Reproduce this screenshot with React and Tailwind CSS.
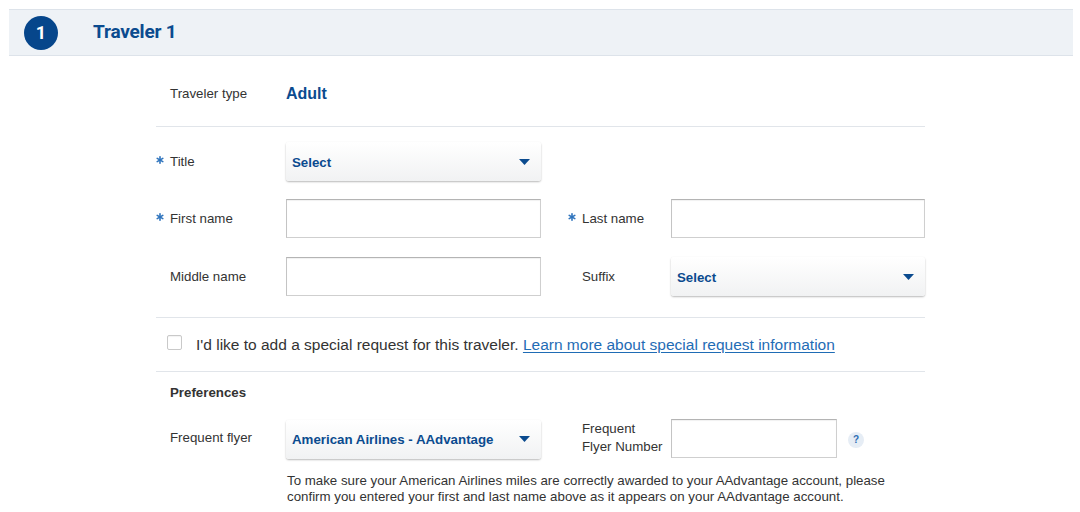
const Caret = () => (
  <svg width="11" height="6" viewBox="0 0 11 6" className="shrink-0">
    <path d="M0 0h11L5.5 6z" fill="#0b4b8f" />
  </svg>
)

// blue six-armed asterisk used for required fields
const Star = () => (
  <svg width="8" height="8" viewBox="0 0 8 8" className="-mt-[3px]">
    <g stroke="#2f74bd" strokeWidth="1.6" strokeLinecap="round">
      <path d="M4 0.8v6.4" />
      <path d="M1.2 2.4l5.6 3.2" />
      <path d="M1.2 5.6l5.6-3.2" />
    </g>
  </svg>
)

const SelectBox = ({ value, width = "w-[255px]" }) => (
  <div className={`${width} h-[39px] flex items-center justify-between pl-[6px] pr-[11px] rounded-[3px] bg-gradient-to-b from-white to-[#f1f2f3] shadow-[0_1px_2px_rgba(0,0,0,0.28)] cursor-pointer`}>
    <span className="text-[13.3px] font-bold text-[#0b4b8f] pt-[2px]">{value}</span>
    <Caret />
  </div>
)

const TextBox = ({ width = "w-[255px]" }) => (
  <div className={`${width} h-[39px] bg-white border border-[#cfcfcf] border-t-[#b4b4b4] border-l-[#c4c4c4] shadow-[inset_0_1px_1px_rgba(0,0,0,0.06)]`} />
)

const Label = ({ required, children, width = "w-[130px]" }) => (
  <div className={`${width} flex items-center shrink-0 text-[13.3px] text-[#333]`}>
    <span className="w-[14px] flex">{required && <Star />}</span>
    <span>{children}</span>
  </div>
)

export default function App() {
  return (
    <div className="w-[1080px] h-[512px] overflow-hidden bg-white pt-[9px]" style={{ fontFamily: '"Liberation Sans", Arial, sans-serif' }}>
      {/* Header band */}
      <div className="ml-[9px] mr-[7px] h-[47px] bg-[#eef2f6] border-y border-[#dde3ea] flex items-center pl-[15px]" style={{ fontFamily: 'Roboto, "Liberation Sans", sans-serif' }}>
        <div className="w-[34px] h-[34px] rounded-full bg-[#06468b] text-white font-bold text-[18px] flex items-center justify-center">1</div>
        <h2 className="ml-[35px] text-[19px] font-bold text-[#0b4b8f] tracking-[-0.2px]">Traveler 1</h2>
      </div>

      <div className="ml-[156px] w-[769px]">
        {/* Traveler type */}
        <div className="h-[71px] flex items-center pt-[6px] border-b border-[#e1e5ea]">
          <Label>Traveler type</Label>
          <span className="text-[16px] font-bold text-[#0b4b8f]">Adult</span>
        </div>

        {/* Names */}
        <div className="pt-[15px] pb-[21px] border-b border-[#e1e5ea] flex flex-col gap-[18px]">
          <div className="flex items-center h-[39px]">
            <Label required>Title</Label>
            <SelectBox value="Select" />
          </div>
          <div className="flex items-center h-[39px]">
            <Label required>First name</Label>
            <TextBox />
            <div className="w-[27px]" />
            <Label required width="w-[103px]">Last name</Label>
            <TextBox width="w-[254px]" />
          </div>
          <div className="flex items-center h-[39px] mt-[1px]">
            <Label>Middle name</Label>
            <TextBox />
            <div className="w-[27px]" />
            <Label width="w-[103px]">Suffix</Label>
            <SelectBox value="Select" width="w-[254px]" />
          </div>
        </div>

        {/* Special request */}
        <div className="h-[54px] flex items-center pl-[11px] border-b border-[#e1e5ea]">
          <div className="w-[15px] h-[15px] border border-[#c9c9c9] rounded-[2px] bg-white shadow-[inset_0_1px_1px_rgba(0,0,0,0.05)] -mt-[4px]" />
          <p className="ml-[14px] text-[15.5px] text-[#333]">
            I'd like to add a special request for this traveler.{" "}
            <a href="#" className="text-[#1f6cb5] underline underline-offset-2">Learn more about special request information</a>
          </p>
        </div>

        {/* Preferences */}
        <div className="pt-[13px]">
          <h3 className="pl-[14px] text-[13.3px] font-bold text-[#333] leading-[16px]">Preferences</h3>
          <div className="mt-[17px] flex items-center h-[40px]">
            <Label>Frequent flyer</Label>
            <div className="pt-[2px]">
              <SelectBox value="American Airlines - AAdvantage" />
            </div>
            <div className="w-[27px]" />
            <div className="w-[103px] pl-[14px] text-[13.3px] text-[#333] leading-[18px]">
              Frequent<br />Flyer Number
            </div>
            <TextBox width="w-[166px]" />
            <div className="ml-[11px] w-[16px] h-[16px] rounded-full bg-[#e6edf5] text-[#2e6db4] text-[10px] font-bold flex items-center justify-center mt-[3px]">?</div>
          </div>
          <p className="mt-[15px] ml-[131px] text-[13.3px] leading-[16px] text-[#333]">
            To make sure your American Airlines miles are correctly awarded to your AAdvantage account, please<br />
            confirm you entered your first and last name above as it appears on your AAdvantage account.
          </p>
        </div>
      </div>
    </div>
  )
}
